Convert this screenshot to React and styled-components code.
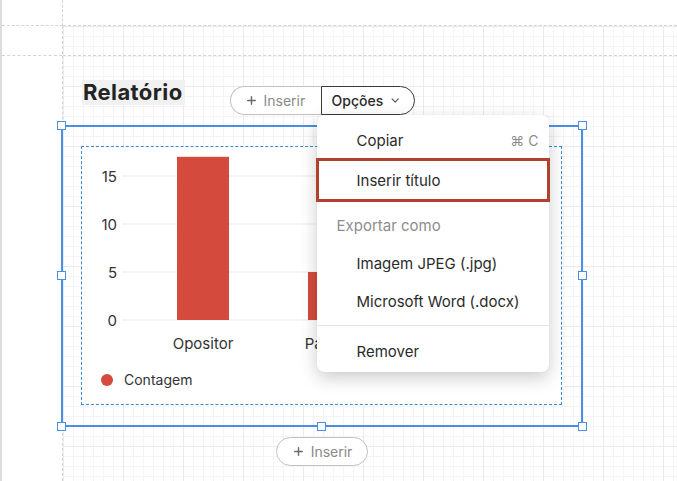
import React from 'react';
import styled, { createGlobalStyle } from 'styled-components';
import { Plus, ChevronDown } from 'lucide-react';

const GlobalStyle = createGlobalStyle`
  html, body {
    margin: 0;
    padding: 0;
    background: #fff;
  }
  body {
    font-family: 'Inter', 'Liberation Sans', sans-serif;
    color: #2a2a2a;
  }
`;

const BLUE = '#4a8fe6';
const DASH = '#d4d4d4';

const Page = styled.div`
  width: 677px;
  height: 481px;
  box-sizing: border-box;
  border-left: 2px solid #dcdcdc;
  display: grid;
  grid-template-columns: 61px 1fr;
  grid-template-rows: 26px 1fr;
  overflow: hidden;
`;

const Corner = styled.div`
  box-sizing: border-box;
  border-right: 1px dashed ${DASH};
  border-bottom: 1px dashed ${DASH};
`;

const TopBar = styled.div`
  box-sizing: border-box;
  border-bottom: 1px dashed ${DASH};
`;

const Gutter = styled.div`
  box-sizing: border-box;
  border-right: 1px dashed ${DASH};
`;

const Strip = styled.div`
  height: 30px;
  box-sizing: border-box;
  border-bottom: 1px dashed ${DASH};
`;

const Canvas = styled.div`
  display: flex;
  flex-direction: column;
  background-color: #fff;
  background-image:
    linear-gradient(to right, #ebebeb 1px, transparent 1px),
    linear-gradient(to bottom, #ebebeb 1px, transparent 1px),
    linear-gradient(to right, #f4f4f4 1px, transparent 1px),
    linear-gradient(to bottom, #f4f4f4 1px, transparent 1px);
  background-size: 60px 60px, 60px 60px, 10px 10px, 10px 10px;
`;

const Stage = styled.div`
  padding-top: 24px;
  margin-left: -2px;
  width: 522px;
  display: flex;
  flex-direction: column;
  align-items: center;
`;

const Header = styled.div`
  width: 100%;
  height: 45px;
  display: grid;
  grid-template-columns: 1fr auto 1fr;
  align-items: start;
`;

const Title = styled.h2`
  margin: 0 0 0 21px;
  justify-self: start;
  padding: 0 2px 0 1px;
  background: #f1f1f1;
  font-size: 22px;
  line-height: 25px;
  font-weight: 700;
  letter-spacing: 0.4px;
  color: #232323;
`;

const Toolbar = styled.div`
  margin-top: 6px;
  display: flex;
  z-index: 2;
`;

const Dropdown = styled.div`
  position: relative;
`;

const Segment = styled.button`
  height: 29px;
  box-sizing: border-box;
  display: flex;
  align-items: center;
  gap: 6px;
  padding: ${(p) => (p.$dark ? '0 12px 0 10px' : '0 10px 0 14px')};
  background: #fff;
  font-family: inherit;
  font-size: 14px;
  font-weight: ${(p) => (p.$dark ? 500 : 400)};
  color: ${(p) => (p.$dark ? '#2a2a2a' : '#8a8a8a')};
  border: 1px solid ${(p) => (p.$dark ? '#3a3a3a' : '#c2c2c2')};
  border-radius: ${(p) => (p.$dark ? '0 15px 15px 0' : '15px 0 0 15px')};
  ${(p) => (p.$dark ? '' : 'border-right: none;')}
  width: ${(p) => p.$width}px;
  cursor: pointer;
  svg {
    color: ${(p) => (p.$dark ? '#555' : '#6a6a6a')};
  }
`;

const Pill = styled(Segment)`
  border-radius: 15px;
  border: 1px solid #c2c2c2;
  justify-content: center;
  padding: 0;
  margin-top: 10px;
`;

const Menu = styled.div`
  position: absolute;
  left: -4px;
  top: 29px;
  width: 232px;
  box-sizing: border-box;
  padding: 6px 0 2px;
  background: #fff;
  border-radius: 7px;
  box-shadow: 0 6px 18px rgba(0, 0, 0, 0.2), 0 0 1px rgba(0, 0, 0, 0.15);
`;

const Item = styled.div`
  display: flex;
  align-items: center;
  justify-content: space-between;
  box-sizing: border-box;
  height: ${(p) => p.$h || 38}px;
  padding: ${(p) => (p.$header ? '4px 10px 0 20px' : '0 10px 0 40px')};
  font-size: 15px;
  color: ${(p) => (p.$header ? '#8d8d8d' : '#2b2b2b')};
  ${(p) =>
    p.$marked &&
    `
    margin: -1px -1px 0;
    border: 3px solid #b0412e;
    padding-left: 38px;
  `}
`;

const Shortcut = styled.span`
  color: #8d8d8d;
  font-size: 14px;
`;

const Divider = styled.hr`
  margin: 5px 0 6px;
  border: none;
  border-top: 1px solid #e6e6e6;
`;

const Frame = styled.div`
  position: relative;
  width: 522px;
  height: 302px;
  box-sizing: border-box;
  border: 2px solid ${BLUE};
  padding: 19px 19px 20px 18px;
  display: flex;
`;

const Handle = styled.span`
  position: absolute;
  width: 9px;
  height: 9px;
  box-sizing: border-box;
  background: #fff;
  border: 1.5px solid ${BLUE};
  ${(p) => (p.$x === 'l' ? 'left: -6px;' : p.$x === 'r' ? 'right: -6px;' : 'left: calc(50% - 5px);')}
  ${(p) => (p.$y === 't' ? 'top: -6px;' : p.$y === 'b' ? 'bottom: -6px;' : 'top: calc(50% - 5px);')}
`;

const ChartBox = styled.div`
  flex: 1;
  background: #fff;
  border: 1px dashed #3b88d6;
  display: flex;
  flex-direction: column;
`;

const Legend = styled.div`
  display: flex;
  align-items: center;
  gap: 11px;
  padding-left: 19px;
  margin-top: 10px;
  font-size: 14px;
  color: #333;
`;

const Dot = styled.span`
  width: 12px;
  height: 12px;
  border-radius: 50%;
  background: ${(p) => p.$color};
`;

const BAR = '#d44a3d';
const data = [
  { label: 'Opositor', value: 17, x: 95 },
  { label: 'Parceiro', value: 5, x: 226 },
  { label: 'Neutro', value: 3, x: 357 },
];
const ticks = [15, 10, 5, 0];
const zeroY = 173;
const unit = 9.6;

function Chart() {
  return (
    <svg width="479" height="214" viewBox="0 0 479 214">
      {ticks.map((t) => (
        <g key={t}>
          <line x1="40" x2="460" y1={zeroY - t * unit} y2={zeroY - t * unit} stroke="#ebebeb" strokeWidth="1.2" />
          <text
            x="35"
            y={zeroY - t * unit}
            textAnchor="end"
            dominantBaseline="central"
            fontFamily="Inter, 'Liberation Sans', sans-serif"
            fontSize="15"
            fill="#333"
          >
            {t}
          </text>
        </g>
      ))}
      {data.map((d) => (
        <g key={d.label}>
          <rect x={d.x} y={zeroY - d.value * unit} width="52" height={d.value * unit} fill={BAR} />
          <text
            x={d.x + 26}
            y="196"
            textAnchor="middle"
            dominantBaseline="central"
            fontFamily="Inter, 'Liberation Sans', sans-serif"
            fontSize="15"
            fill="#333"
          >
            {d.label}
          </text>
        </g>
      ))}
    </svg>
  );
}

export default function App() {
  return (
    <>
      <GlobalStyle />
      <Page>
        <Corner />
        <TopBar />
        <Gutter>
          <Strip />
        </Gutter>
        <Canvas>
          <Strip />
          <Stage>
            <Header>
              <Title>Relatório</Title>
              <Toolbar>
                <Segment $width={91}>
                  <Plus size={13} strokeWidth={2.6} />
                  Inserir
                </Segment>
                <Dropdown>
                  <Segment $dark $width={94}>
                    Opções
                    <ChevronDown size={13} strokeWidth={2.2} />
                  </Segment>
                  <Menu>
                    <Item>
                      Copiar
                      <Shortcut>⌘ C</Shortcut>
                    </Item>
                    <Item $marked $h={44}>Inserir título</Item>
                    <Item $header $h={42}>Exportar como</Item>
                    <Item>Imagem JPEG (.jpg)</Item>
                    <Item>Microsoft Word (.docx)</Item>
                    <Divider />
                    <Item>Remover</Item>
                  </Menu>
                </Dropdown>
              </Toolbar>
            </Header>
            <Frame>
              <Handle $x="l" $y="t" />
              <Handle $x="c" $y="t" />
              <Handle $x="r" $y="t" />
              <Handle $x="l" $y="m" />
              <Handle $x="r" $y="m" />
              <Handle $x="l" $y="b" />
              <Handle $x="c" $y="b" />
              <Handle $x="r" $y="b" />
              <ChartBox>
                <Chart />
                <Legend>
                  <Dot $color={BAR} />
                  Contagem
                </Legend>
              </ChartBox>
            </Frame>
            <Pill $width={92}>
              <Plus size={13} strokeWidth={2.6} />
              Inserir
            </Pill>
          </Stage>
        </Canvas>
      </Page>
    </>
  );
}
